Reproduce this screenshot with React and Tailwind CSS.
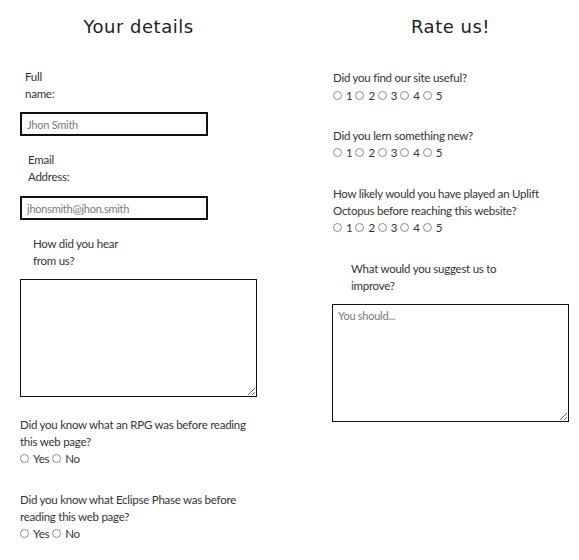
import React from 'react';

const Radio = ({ name, label }) => (
    <label className="flex items-center">
        <input
            type="radio"
            name={name}
            className="appearance-none w-[9px] h-[9px] rounded-full border border-[#8a8a8a] bg-white m-0"
        />
        <span className="ml-[4px] mr-[3px]">{label}</span>
    </label>
);

const Question = ({ text, name, options, className = '' }) => (
    <div className={className}>
        <p className="leading-[16.5px]">{text}</p>
        <div className="flex items-center leading-[17px]">
            {options.map((o) => (
                <Radio key={o} name={name} label={o} />
            ))}
        </div>
    </div>
);

const Heading = ({ children }) => (
    <h2
        className="text-center text-[18px] leading-[26px] text-[#222] tracking-[0.5px]"
        style={{ fontFamily: '"DejaVu Sans", sans-serif' }}
    >
        {children}
    </h2>
);

const App = () => {
    const ratings = ['1', '2', '3', '4', '5'];
    const yesNo = ['Yes', 'No'];

    return (
        <div
            className="flex bg-white text-[#333] text-[11.5px] tracking-[-0.25px] w-[579px] h-[560px] overflow-hidden"
            style={{ fontFamily: 'Lato, sans-serif' }}
        >
            {/* Your details */}
            <div className="ml-[20px] w-[237px] pt-[14px]">
                <Heading>Your details</Heading>

                <label className="block ml-[5px] mt-[29px] w-[40px] leading-[16.5px]">Full name:</label>
                <input
                    type="text"
                    placeholder="Jhon Smith"
                    className="block mt-[10px] w-[188px] h-[24px] border-2 border-[#111] px-[5px] text-[11px] placeholder:text-[#7a7a7a] outline-none"
                />

                <label className="block ml-[8px] mt-[16px] w-[50px] leading-[16.5px]">Email Address:</label>
                <input
                    type="email"
                    placeholder="jhonsmith@jhon.smith"
                    className="block mt-[11px] w-[188px] h-[24px] border-2 border-[#111] px-[5px] text-[11px] placeholder:text-[#7a7a7a] outline-none"
                />

                <label className="block ml-[13px] mt-[16px] w-[92px] leading-[16.5px]">How did you hear from us?</label>
                <textarea className="block mt-[10px] w-[237px] h-[118px] border border-[#111] outline-none" />

                <Question
                    className="mt-[20px] w-[230px]"
                    name="rpg"
                    text="Did you know what an RPG was before reading this web page?"
                    options={yesNo}
                />
                <Question
                    className="mt-[25px] w-[230px]"
                    name="eclipse"
                    text="Did you know what Eclipse Phase was before reading this web page?"
                    options={yesNo}
                />
            </div>

            {/* Rate us */}
            <div className="ml-[75px] w-[237px] pt-[14px]">
                <Heading>Rate us!</Heading>

                <Question
                    className="mt-[30px] ml-[1px]"
                    name="useful"
                    text="Did you find our site useful?"
                    options={ratings}
                />
                <Question
                    className="mt-[24px] ml-[1px]"
                    name="learn"
                    text="Did you lern something new?"
                    options={ratings}
                />
                <Question
                    className="mt-[25px] ml-[1px] w-[215px]"
                    name="octopus"
                    text="How likely would you have played an Uplift Octopus before reaching this website?"
                    options={ratings}
                />

                <label className="block ml-[19px] mt-[25px] w-[150px] leading-[16.5px]">
                    What would you suggest us to improve?
                </label>
                <textarea
                    placeholder="You should..."
                    className="block mt-[10px] w-[237px] h-[118px] border border-[#111] px-[5px] py-[3px] text-[11px] placeholder:text-[#7a7a7a] outline-none"
                />
            </div>
        </div>
    );
};

export default App;
